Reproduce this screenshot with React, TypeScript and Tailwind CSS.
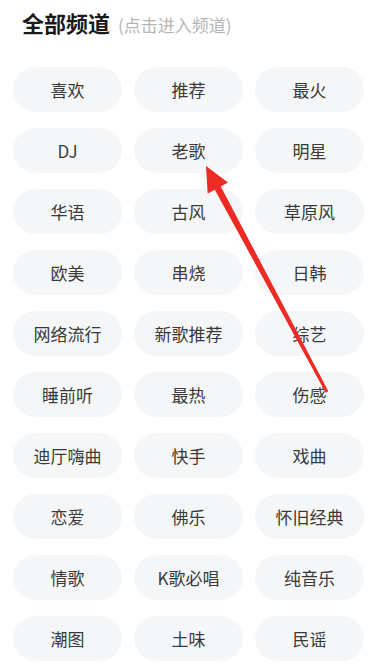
const channels = [
  '喜欢', '推荐', '最火',
  'DJ', '老歌', '明星',
  '华语', '古风', '草原风',
  '欧美', '串烧', '日韩',
  '网络流行', '新歌推荐', '综艺',
  '睡前听', '最热', '伤感',
  '迪厅嗨曲', '快手', '戏曲',
  '恋爱', '佛乐', '怀旧经典',
  '情歌', 'K歌必唱', '纯音乐',
  '潮图', '土味', '民谣',
]

function Arrow() {
  // tip near 老歌, tail near 伤感
  const tip = [206, 166]
  const tail = [327, 392]
  const dx = tail[0] - tip[0]
  const dy = tail[1] - tip[1]
  const len = Math.hypot(dx, dy)
  const ux = dx / len
  const uy = dy / len
  const nx = uy
  const ny = -ux
  const headLen = 25
  const headHalf = 11.5
  const bx = tip[0] + ux * headLen
  const by = tip[1] + uy * headLen
  const pts = [
    [tip[0], tip[1]],
    [bx + nx * headHalf, by + ny * headHalf],
    [bx + nx * 3.4, by + ny * 3.4],
    [tail[0] + nx * 1.5, tail[1] + ny * 1.5],
    [tail[0] - nx * 1.5, tail[1] - ny * 1.5],
    [bx - nx * 3.4, by - ny * 3.4],
    [bx - nx * headHalf, by - ny * headHalf],
  ]
  return (
    <svg className="pointer-events-none absolute left-0 top-0" width="375" height="666">
      <polygon points={pts.map((p) => p.join(',')).join(' ')} fill="#ee2a24" />
    </svg>
  )
}

export default function App() {
  return (
    <div
      className="relative h-[666px] w-[375px] overflow-hidden bg-white"
      style={{ fontFamily: '"Noto Sans CJK SC", "Noto Sans", sans-serif' }}
    >
      <div className="flex h-[30px] items-baseline pl-[22px] mt-[7px]">
        <h1 className="text-[22px] font-bold leading-[30px] text-[#1a1a1a]">全部频道</h1>
        <p className="ml-[8px] text-[17px] leading-[22px] text-[#b5b5b5]">(点击进入频道)</p>
      </div>
      <div className="mt-[30px] grid grid-cols-3 gap-x-3 gap-y-4 pl-[13px] pr-[11px]">
        {channels.map((name) => (
          <div
            key={name}
            className="flex h-[45px] items-center justify-center rounded-full bg-[#f5f6f8] text-[17px] text-[#3a3a3a]"
          >
            {name}
          </div>
        ))}
      </div>
      <Arrow />
    </div>
  )
}
